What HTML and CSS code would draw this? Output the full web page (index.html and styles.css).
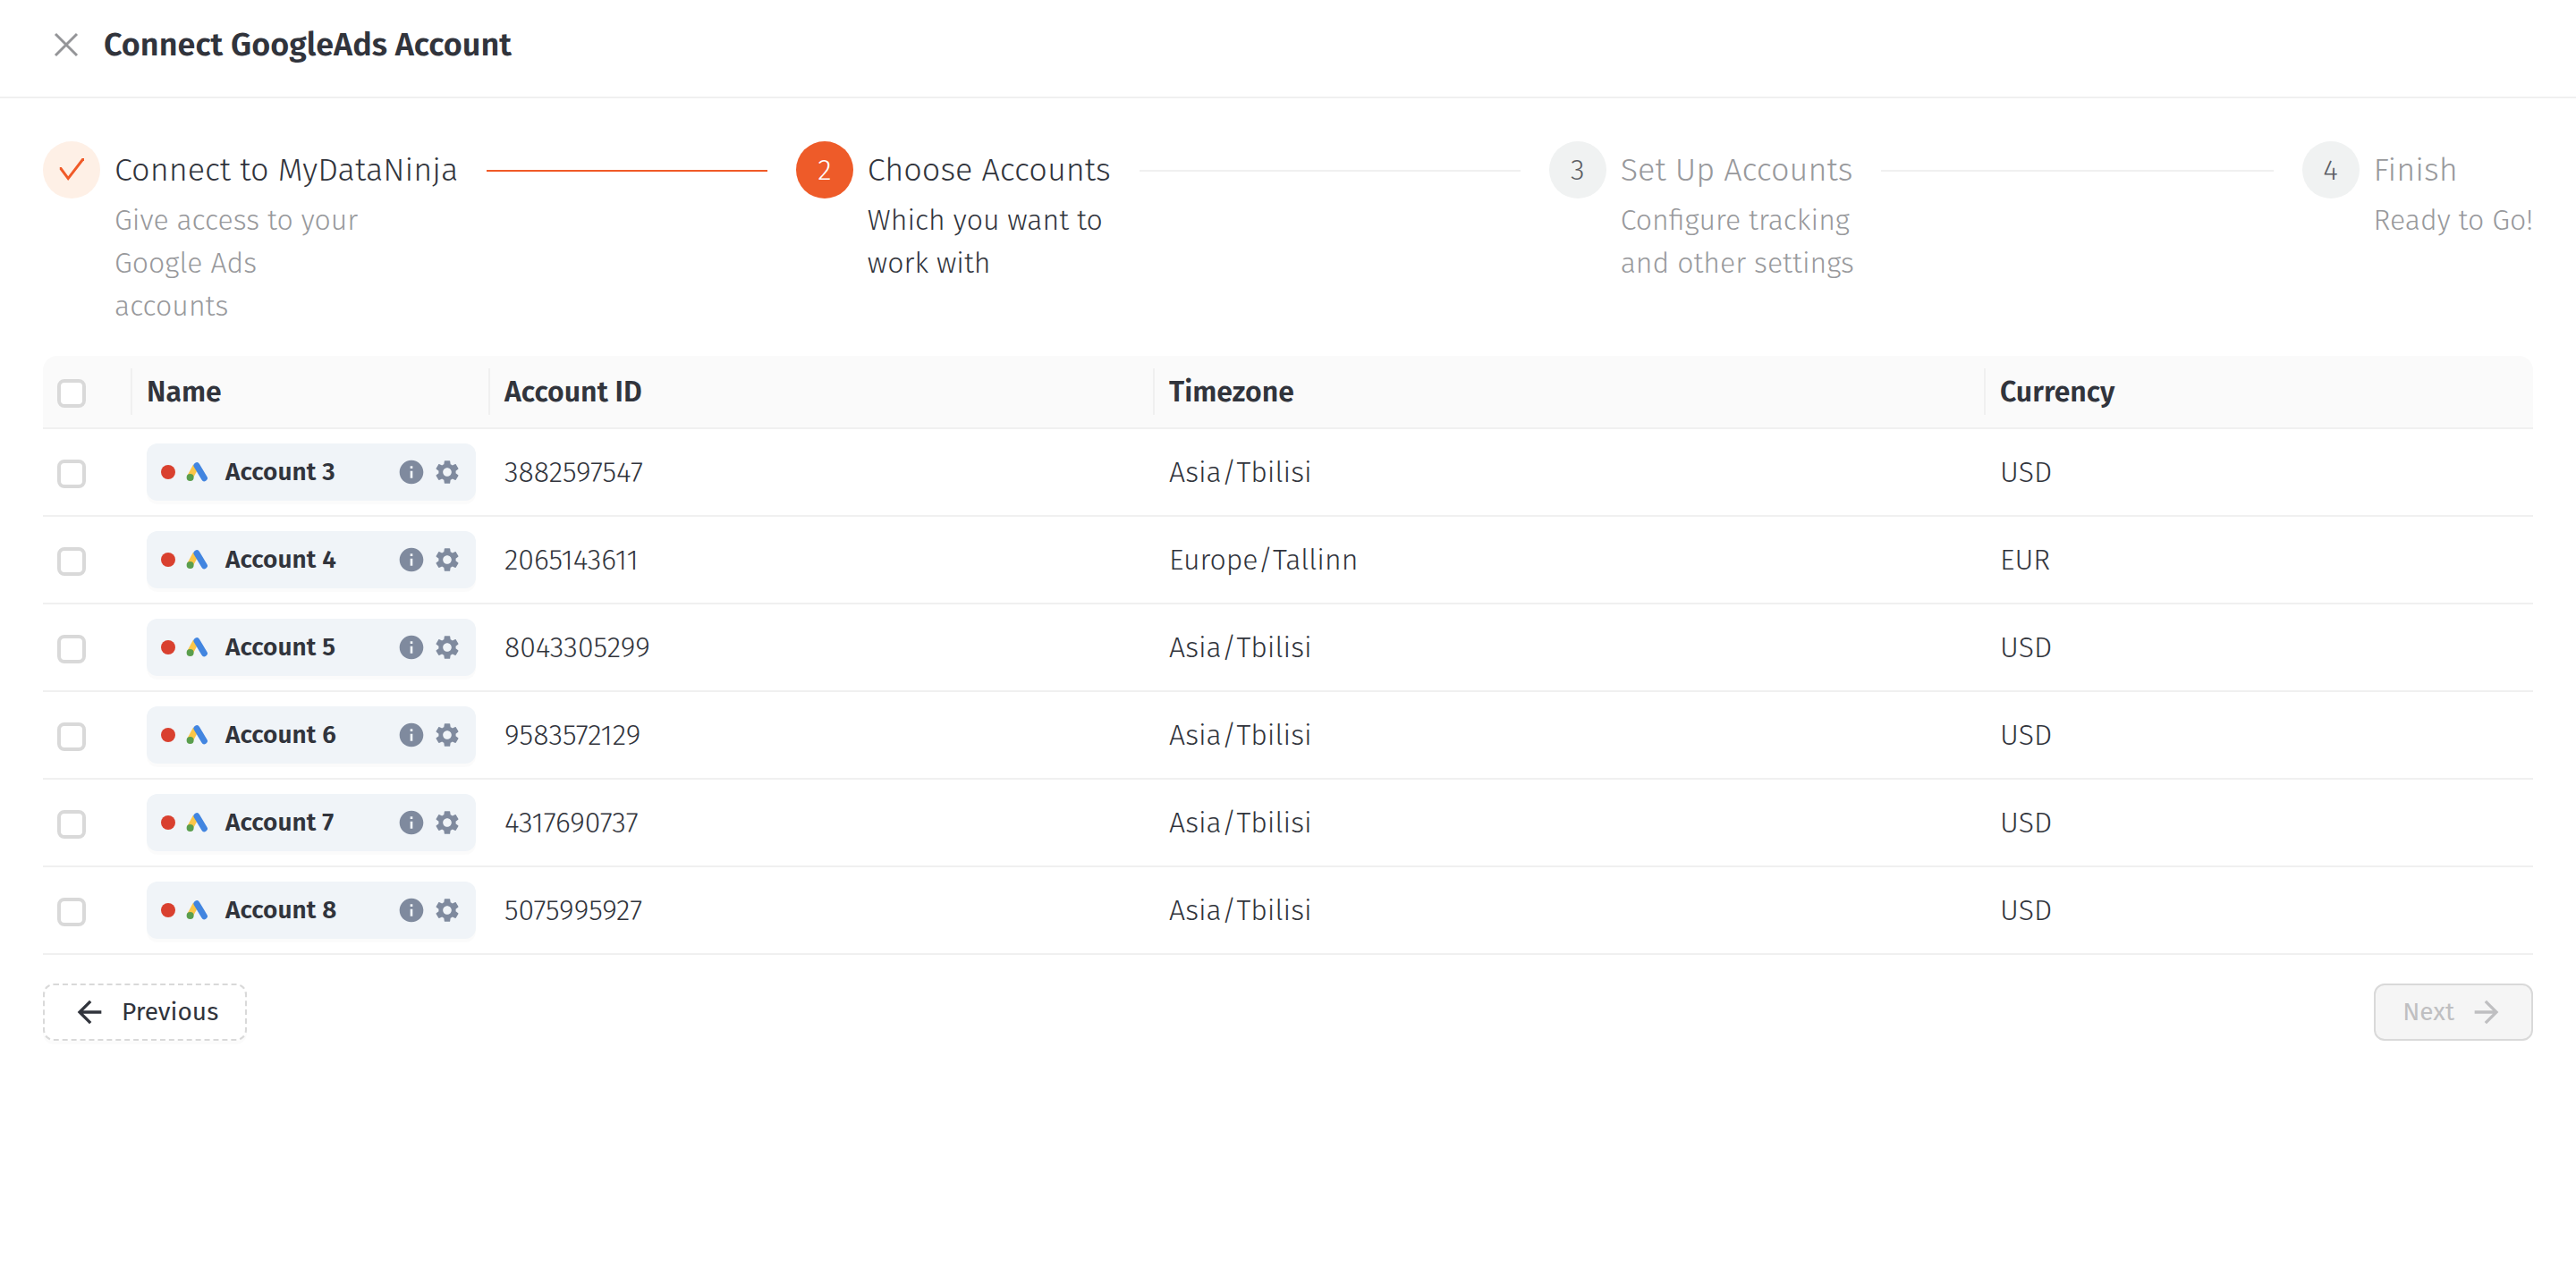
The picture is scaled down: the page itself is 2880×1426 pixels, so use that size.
FILE: index.html
```html
<!DOCTYPE html>
<html lang="en">
<head>
<meta charset="utf-8">
<title>Connect GoogleAds Account</title>
<link rel="stylesheet" href="styles.css">
</head>
<body>
<svg class="sprite" aria-hidden="true">
  <symbol id="ads" viewBox="0 0 24 22">
    <path d="M11 4.500 4.500 16.500" stroke="#fbc647" stroke-width="7" fill="none"/>
    <circle cx="4.600" cy="17" r="4" fill="#5a9e4d"/>
    <path d="M12 3.700 20.400 17.700" stroke="#4285e0" stroke-width="7" stroke-linecap="round" fill="none"/>
  </symbol>
  <symbol id="info" viewBox="0 0 24 24">
    <path d="M12 2C6.480 2 2 6.480 2 12s4.480 10 10 10 10-4.480 10-10S17.520 2 12 2zm1 15h-2v-6h2v6zm0-8h-2V7h2v2z"/>
  </symbol>
  <symbol id="gear" viewBox="0 0 24 24">
    <path d="M19.140 12.940c.04-.3.06-.61.06-.94 0-.32-.02-.64-.07-.94l2.030-1.580c.18-.14.23-.41.12-.61l-1.920-3.320c-.12-.22-.37-.29-.59-.22l-2.390.96c-.5-.38-1.030-.7-1.620-.94l-.36-2.540c-.04-.24-.24-.41-.48-.41h-3.840c-.24 0-.43.17-.47.41l-.36 2.540c-.59.24-1.130.57-1.620.94l-2.390-.96c-.22-.08-.47 0-.59.22L2.740 8.870c-.12.21-.08.47.12.61l2.030 1.580c-.05.3-.09.63-.09.94s.02.64.07.94l-2.030 1.580c-.18.14-.23.41-.12.61l1.920 3.320c.12.22.37.29.59.22l2.390-.96c.5.38 1.030.7 1.620.94l.36 2.540c.05.24.24.41.48.41h3.840c.24 0 .44-.17.47-.41l.36-2.540c.59-.24 1.130-.56 1.620-.94l2.390.96c.22.08.47 0 .59-.22l1.920-3.320c.12-.22.07-.47-.12-.61l-2.010-1.580zM12 15.600c-1.980 0-3.600-1.620-3.600-3.600s1.620-3.600 3.600-3.600 3.600 1.620 3.600 3.600-1.620 3.600-3.600 3.600z"/>
  </symbol>
</svg>

<header class="header">
  <button class="close" type="button" aria-label="Close">
    <svg viewBox="0 0 28 28"><path d="M2 2 26 26M26 2 2 26"/></svg>
  </button>
  <h1 class="title">Connect GoogleAds Account</h1>
</header>

<main class="content">
  <ol class="steps">
    <li class="step step-done">
      <span class="step-icon"><svg viewBox="0 0 28 28"><path d="M.8 12.500H2L10.200 23.600 26.400 2.500H28"/></svg></span>
      <div class="step-body">
        <div class="step-title">Connect to MyDataNinja</div>
        <div class="step-text">Give access to your Google Ads accounts</div>
      </div>
    </li>
    <li class="step step-active">
      <span class="step-icon">2</span>
      <div class="step-body">
        <div class="step-title">Choose Accounts</div>
        <div class="step-text">Which you want to work with</div>
      </div>
    </li>
    <li class="step">
      <span class="step-icon">3</span>
      <div class="step-body">
        <div class="step-title">Set Up Accounts</div>
        <div class="step-text">Configure tracking and other settings</div>
      </div>
    </li>
    <li class="step">
      <span class="step-icon">4</span>
      <div class="step-body">
        <div class="step-title">Finish</div>
        <div class="step-text">Ready to Go!</div>
      </div>
    </li>
  </ol>

  <table class="accounts">
    <colgroup><col class="col-check"><col class="col-name"><col class="col-id"><col class="col-zone"><col class="col-currency"></colgroup>
    <thead>
      <tr><th><input type="checkbox" aria-label="Select all accounts"></th><th>Name</th><th>Account ID</th><th>Timezone</th><th>Currency</th></tr>
    </thead>
    <tbody>
      <tr>
        <td><input type="checkbox" aria-label="Select Account 3"></td>
        <td><div class="tag"><span class="dot"></span><svg class="ads"><use href="#ads"/></svg><span class="tag-name">Account 3</span><svg class="tool"><use href="#info"/></svg><svg class="tool"><use href="#gear"/></svg></div></td>
        <td>3882597547</td><td>Asia/Tbilisi</td><td>USD</td>
      </tr>
      <tr>
        <td><input type="checkbox" aria-label="Select Account 4"></td>
        <td><div class="tag"><span class="dot"></span><svg class="ads"><use href="#ads"/></svg><span class="tag-name">Account 4</span><svg class="tool"><use href="#info"/></svg><svg class="tool"><use href="#gear"/></svg></div></td>
        <td>2065143611</td><td>Europe/Tallinn</td><td>EUR</td>
      </tr>
      <tr>
        <td><input type="checkbox" aria-label="Select Account 5"></td>
        <td><div class="tag"><span class="dot"></span><svg class="ads"><use href="#ads"/></svg><span class="tag-name">Account 5</span><svg class="tool"><use href="#info"/></svg><svg class="tool"><use href="#gear"/></svg></div></td>
        <td>8043305299</td><td>Asia/Tbilisi</td><td>USD</td>
      </tr>
      <tr>
        <td><input type="checkbox" aria-label="Select Account 6"></td>
        <td><div class="tag"><span class="dot"></span><svg class="ads"><use href="#ads"/></svg><span class="tag-name">Account 6</span><svg class="tool"><use href="#info"/></svg><svg class="tool"><use href="#gear"/></svg></div></td>
        <td>9583572129</td><td>Asia/Tbilisi</td><td>USD</td>
      </tr>
      <tr>
        <td><input type="checkbox" aria-label="Select Account 7"></td>
        <td><div class="tag"><span class="dot"></span><svg class="ads"><use href="#ads"/></svg><span class="tag-name">Account 7</span><svg class="tool"><use href="#info"/></svg><svg class="tool"><use href="#gear"/></svg></div></td>
        <td>4317690737</td><td>Asia/Tbilisi</td><td>USD</td>
      </tr>
      <tr>
        <td><input type="checkbox" aria-label="Select Account 8"></td>
        <td><div class="tag"><span class="dot"></span><svg class="ads"><use href="#ads"/></svg><span class="tag-name">Account 8</span><svg class="tool"><use href="#info"/></svg><svg class="tool"><use href="#gear"/></svg></div></td>
        <td>5075995927</td><td>Asia/Tbilisi</td><td>USD</td>
      </tr>
    </tbody>
  </table>

  <footer class="actions">
    <button class="btn btn-dashed" type="button">
      <svg viewBox="0 0 24 24"><path d="M20 11H7.830l5.590-5.590L12 4l-8 8 8 8 1.410-1.410L7.830 13H20v-2z"/></svg>
      Previous
    </button>
    <button class="btn" type="button" disabled>
      Next
      <svg viewBox="0 0 24 24"><path d="M12 4l-1.410 1.410L16.170 11H4v2h12.170l-5.580 5.590L12 20l8-8z"/></svg>
    </button>
  </footer>
</main>
</body>
</html>
```
FILE: styles.css
```css
* { box-sizing: border-box; }

body {
  margin: 0;
  background: #fff;
  color: #31343c;
  font: 300 32px/48px "Fira Sans", "Noto Sans", sans-serif;
}

.sprite { display: none; }

.header {
  display: flex;
  align-items: center;
  gap: 28px;
  padding: 25px 60px 33px;
  border-bottom: 2px solid #f0f0f0;
}

.close {
  display: flex;
  padding: 0;
  border: 0;
  background: none;
}

.close svg { width: 28px; height: 28px; }
.close path { stroke: #949598; stroke-width: 3; fill: none; }

.title {
  margin: 0;
  font-size: 36px;
  font-weight: 600;
  line-height: 50px;
}

.content { padding: 48px; }

.steps {
  display: flex;
  gap: 32px;
  margin: 0;
  padding: 0;
  list-style: none;
}

.step {
  display: flex;
  flex: 1;
  gap: 16px;
  overflow: hidden;
  color: #98999c;
}

.step:last-child { flex: none; }

.step-icon {
  display: flex;
  flex: none;
  align-items: center;
  justify-content: center;
  width: 64px;
  height: 64px;
  border-radius: 50%;
  background: #f0f2f2;
  color: #5c5e64;
}

.step-icon svg { width: 28px; height: 28px; }
.step-icon path { stroke: #f05a28; stroke-width: 3; fill: none; }

.step-body { flex: 1; }

.step-title {
  display: flex;
  align-items: center;
  gap: 32px;
  font-size: 36px;
  line-height: 64px;
  white-space: nowrap;
}

.step:not(:last-child) .step-title::after {
  content: "";
  flex: 1;
  height: 2px;
  margin-top: 2px;
  background: #f0f0f0;
}

.step-text { max-width: 280px; }

.step-done .step-title,
.step-active { color: #31343c; }

.step-done .step-icon { background: #fef0e6; }
.step-done .step-title::after { background: #f05a28 !important; }
.step-active .step-icon { background: #ee5b29; color: #fff; }

.accounts {
  width: 100%;
  margin-top: 32px;
  table-layout: fixed;
  border-spacing: 0;
}

.col-check { width: 100px; }
.col-name { width: 400px; }
.col-id { width: 26.690%; }
.col-zone { width: 33.370%; }

.accounts th,
.accounts td {
  padding: 16px;
  border-bottom: 2px solid #f0f0f0;
  text-align: left;
}

.accounts th {
  background: #fafafa;
  font-weight: 600;
}

.accounts th:not(:last-child) {
  background: linear-gradient(#f0f0f0, #f0f0f0) right center / 2px 52px no-repeat #fafafa;
}

.accounts th:first-child { border-top-left-radius: 16px; }
.accounts th:last-child { border-top-right-radius: 16px; }

.accounts input {
  display: block;
  appearance: none;
  width: 32px;
  height: 32px;
  margin: 4px 0 0;
  border: 4px solid #d9d9d9;
  border-radius: 8px;
  background: #fff;
}

.tag {
  display: flex;
  align-items: center;
  height: 64px;
  padding: 0 16px;
  border-radius: 12px;
  background: #f0f4f8;
  box-shadow: 0 4px 0 rgba(0, 0, 0, .016);
}

.dot {
  width: 16px;
  height: 16px;
  border-radius: 50%;
  background: #d9402f;
}

.ads { width: 24px; height: 22px; margin: 0 20px 0 12px; }

.tag-name {
  flex: 1;
  font-size: 28px;
  font-weight: 600;
}

.tool { width: 32px; height: 32px; margin-left: 8px; fill: #7f8a9e; }

.actions {
  display: flex;
  justify-content: space-between;
  margin-top: 32px;
}

.btn {
  display: flex;
  align-items: center;
  gap: 16px;
  height: 64px;
  padding: 0 30px;
  border: 2px solid #d9d9d9;
  border-radius: 12px;
  background: #fff;
  color: #31343c;
  font: 400 28px/44px "Fira Sans", "Noto Sans", sans-serif;
  box-shadow: 0 4px 0 rgba(0, 0, 0, .016);
}

.btn svg { width: 40px; height: 40px; fill: currentColor; }
.btn-dashed { border-style: dashed; }

.btn:disabled {
  background: #f5f5f5;
  color: #bfbfc1;
  box-shadow: none;
}
```
